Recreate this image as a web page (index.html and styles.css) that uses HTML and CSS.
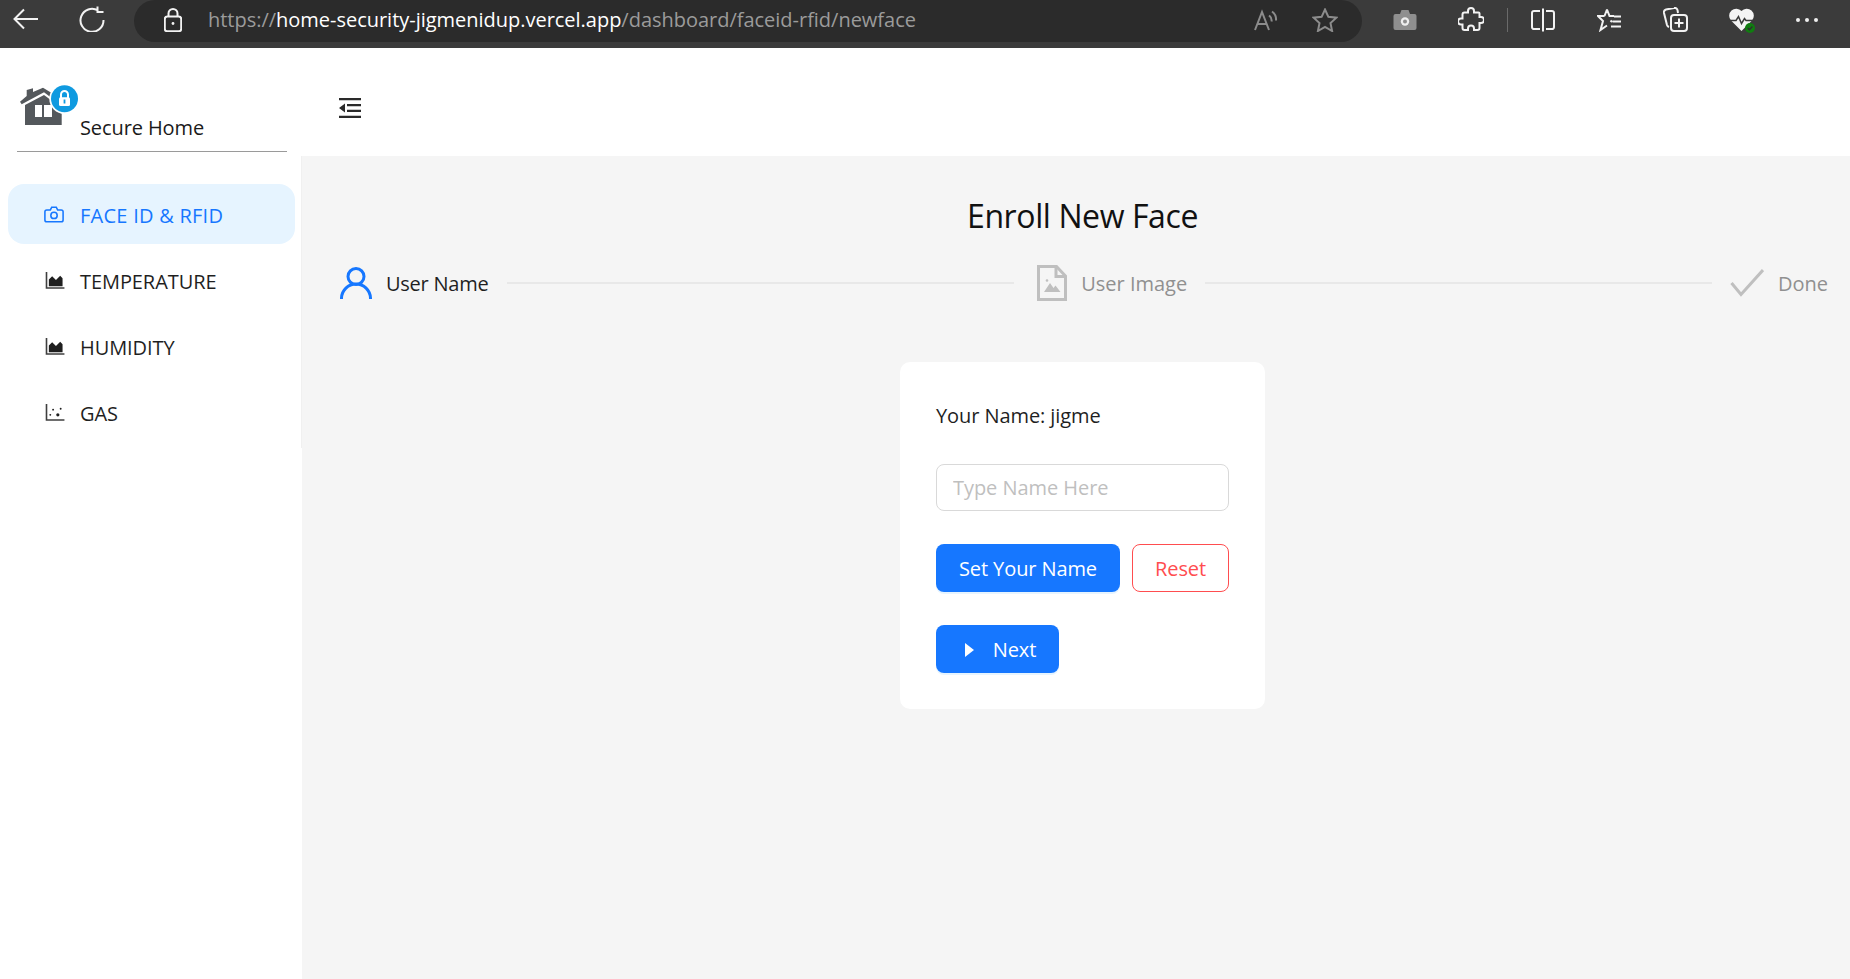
FILE: index.html
```html
<!DOCTYPE html>
<html lang="en">
<head>
<meta charset="utf-8">
<title>Secure Home</title>
<link rel="stylesheet" href="styles.css">
</head>
<body>
<header class="browser">
  <svg class="bi back" viewBox="0 0 26 22"><path d="M25 11H2M11 1.500 1.500 11l9.500 9.500"/></svg>
  <svg class="bi reload" viewBox="0 0 26 26"><path d="M19 4.500A11.500 11.500 0 1 0 24.500 14M18.500 .5v5.500H24.500"/></svg>
  <div class="urlbar">
    <svg class="bi lock" viewBox="0 0 18 24"><rect x=".8" y="8.500" width="16.400" height="14.700" rx="2.500"/><path d="M4.500 8.500V5.500a4.500 4.500 0 0 1 9 0v3"/><circle class="solid" cx="9" cy="15.500" r="1.400"/></svg>
    <div class="url"><span class="dim">https://</span><span class="host">home-security-jigmenidup.vercel.app</span><span class="dim">/dashboard/faceid-rfid/newface</span></div>
    <svg class="bi gray read" viewBox="0 0 24 22"><path d="M1 21 8 3l7 18M3.500 15h9M15 6.500a6 6 0 0 1 2.500 6M18 2.500a10 10 0 0 1 4 9"/></svg>
    <svg class="bi gray star" viewBox="0 0 26 24"><path d="m13 1.500 3.400 7.300 8 .9-5.900 5.400 1.600 7.900-7.100-4-7.100 4 1.600-7.900-5.900-5.400 8-.9z"/></svg>
  </div>
  <svg class="ti camera" viewBox="0 0 24 22"><path class="camfill" d="M2.500 5H7l1.500-4h7L17 5h4.500A2 2 0 0 1 23.500 7v12a2 2 0 0 1-2 2h-19a2 2 0 0 1-2-2V7a2 2 0 0 1 2-2z"/><circle class="camhole" cx="12" cy="12.500" r="4.200"/><circle class="camfill" cx="12" cy="12.500" r="2"/></svg>
  <svg class="bi puzzle" viewBox="0 0 26 26"><path d="M10 4a3 3 0 0 1 6 0v1.500h4.500a1 1 0 0 1 1 1V10H23a3 3 0 0 1 0 6h-1.500v5a2 2 0 0 1-2 2H16v-1.500a3 3 0 0 0-6 0V23H6.500a2 2 0 0 1-2-2v-3.500H3a3 3 0 0 1 0-6h1.500V7.500a2 2 0 0 1 2-2H10z"/></svg>
  <span class="sep"></span>
  <svg class="bi split" viewBox="0 0 24 24"><path d="M9 3H3.500A2 2 0 0 0 1 5v14a2 2 0 0 0 2.500 2H9M15 3h5.500A2 2 0 0 1 23 5v14a2 2 0 0 1-2.500 2H15M12 .5v23"/></svg>
  <svg class="bi favs" viewBox="0 0 25 24"><path d="M10 1.500 12.500 8H17M13.500 12.500 15 14M7.500 8H1l5 5-2.500 9 6.500-4.500M10 1.500 7.500 8M17 8.500h7M15.500 13.500h8.500M14 18.500h10"/></svg>
  <svg class="bi coll" viewBox="0 0 25 25"><path d="M6 20a3 3 0 0 1-2-2L1 6a3 3 0 0 1 2-3.500L11 1a3 3 0 0 1 3.500 2l.5 3"/><rect x="8" y="8" width="16" height="16" rx="3"/><path d="M16 11.500v9M11.500 16h9"/></svg>
  <svg class="ti heart" viewBox="0 0 26 26"><path class="hfill" d="M12.500 23 2 12.500A7 7 0 0 1 12.500 3 7 7 0 0 1 23 12.500z"/><path class="hline" d="M0 12.500h7l2.500-4 3 7 3-5 1.500 2h9"/><circle class="badge" cx="21" cy="20" r="5"/><path class="btick" d="m18.700 20 1.700 1.700 3-3.200"/></svg>
  <div class="dots"><i></i><i></i><i></i></div>
</header>

<div class="app">
  <aside class="sidebar">
    <div class="brand">
      <svg class="logo" viewBox="0 0 60 42">
        <path class="house" d="M0 16.700 6.700 11V5L13 3.300V7L23 2.700 35 10 33 14 24 7.300 1.700 19.300z"/>
        <path class="house" d="M5 20 24 10 41.700 23V40H5z"/>
        <rect class="win" x="15" y="20" width="7" height="12"/>
        <rect class="win" x="24" y="20" width="8" height="12"/>
        <circle class="ring" cx="44.500" cy="13.700" r="15.200"/>
        <circle class="disc" cx="44.500" cy="13.700" r="13.500"/>
        <path class="shackle" d="M41 13V9.500a3.500 3.500 0 0 1 7 0V13"/>
        <rect class="ring" x="39" y="12.300" width="11" height="8.700" rx="1.500"/>
        <rect class="disc" x="43.600" y="14.500" width="1.800" height="4"/>
      </svg>
      <span class="brand-name">Secure Home</span>
    </div>
    <nav class="menu">
      <a class="item active"><svg class="micon" viewBox="0 0 22 18"><path class="mstroke" d="M3 4h4l1.500-3h5L15 4h4a2 2 0 0 1 2 2v9a2 2 0 0 1-2 2H3a2 2 0 0 1-2-2V6a2 2 0 0 1 2-2z"/><circle class="mstroke" cx="11" cy="10" r="3.500"/></svg>FACE ID &amp; RFID</a>
      <a class="item"><svg class="micon chart" viewBox="0 0 20 18"><path class="mstroke" d="M1 0v17h19"/><path class="mfill" d="M3.500 15V8L7 4.500l4 4L15.500 4 18 6.500V15z"/></svg>TEMPERATURE</a>
      <a class="item"><svg class="micon chart" viewBox="0 0 20 18"><path class="mstroke" d="M1 0v17h19"/><path class="mfill" d="M3.500 15V8L7 4.500l4 4L15.500 4 18 6.500V15z"/></svg>HUMIDITY</a>
      <a class="item"><svg class="micon chart" viewBox="0 0 20 18"><path class="mstroke" d="M1 0v17h19"/><circle class="mfill" cx="5" cy="11.500" r="1"/><circle class="mfill" cx="8" cy="6" r="1"/><circle class="mfill" cx="13" cy="11.500" r="1.700"/><circle class="mfill" cx="16" cy="5" r="1"/></svg>GAS</a>
    </nav>
  </aside>

  <div class="content">
    <div class="topbar">
      <svg class="collapse" viewBox="0 0 22 20"><path d="M0 0h22v2.200H0zM0 17.800h22V20H0zM8 6h14v2.200H8zM8 11.800h14V14H8zM0 10l6-4.500v9z"/></svg>
    </div>
    <main class="main">
      <h1 class="title">Enroll New Face</h1>
      <ol class="steps">
        <li class="step current">
          <svg class="sicon user" viewBox="0 0 32 32"><circle cx="16" cy="9.500" r="8"/><path d="M1.500 32v-1A14.500 14.500 0 0 1 16 17a14.500 14.500 0 0 1 14.500 14v1"/></svg>
          <span>User Name</span>
        </li>
        <li class="rule first"></li>
        <li class="step">
          <svg class="sicon file" viewBox="0 0 30 36"><path class="fstroke" d="M1.500 1.500h18l9 9.500v23.500h-27z"/><path class="fstroke" d="M19 2v9.500h9"/><path class="ffill" d="m7 27 6-9 3.500 5 2-2.500 5 6.500z"/><circle class="ffill" cx="10" cy="15.500" r="1.300"/></svg>
          <span>User Image</span>
        </li>
        <li class="rule"></li>
        <li class="step">
          <svg class="sicon check" viewBox="0 0 34 28"><path d="M1.500 14 11 25.500 33 1"/></svg>
          <span>Done</span>
        </li>
      </ol>
      <section class="card">
        <p class="your-name">Your Name: jigme</p>
        <input class="name-input" type="text" placeholder="Type Name Here">
        <div class="actions">
          <button class="btn primary set" type="button">Set Your Name</button>
          <button class="btn danger" type="button">Reset</button>
        </div>
        <button class="btn primary next" type="button"><svg class="play" viewBox="0 0 9 14"><path d="M0 0l9 7-9 7z"/></svg>Next</button>
      </section>
    </main>
  </div>
</div>
</body>
</html>
```

FILE: styles.css
```css
* { box-sizing: border-box; }
html, body { margin: 0; height: 100%; overflow: hidden; }
body { font-family: "Open Sans", "Noto Sans", sans-serif; color: #1f1f1f; background: #fff; width: 1850px; height: 979px; display: flex; flex-direction: column; }

.browser { height: 48px; flex: none; background: #3b3b3b; display: flex; align-items: flex-start; position: relative; }
.bi { fill: none; stroke: #f2f2f2; stroke-width: 2; flex: none; display: block; }
.bi .solid { fill: #f2f2f2; stroke: none; }
.bi.gray { stroke: #8c8c8c; }
.ti { flex: none; display: block; }
.back { width: 26px; height: 22px; margin: 8px 0 0 13px; }
.reload { width: 26px; height: 26px; margin: 6px 0 0 40px; }
.urlbar { width: 1228px; height: 42px; margin-left: 29px; background: #2b2b2b; border-radius: 21px; display: flex; align-items: center; flex: none; }
.lock { width: 18px; height: 24px; margin-left: 30px; margin-top: -2px; }
.url { margin-left: 26px; width: 1046px; font-size: 20px; letter-spacing: -.02px; white-space: nowrap; flex: none; margin-top: -3px; }
.dim { color: #9b9b9b; }
.host { color: #fff; }
.read { width: 24px; height: 22px; margin-left: 0; margin-top: -2px; }
.star { width: 26px; height: 24px; margin-left: 34px; margin-top: -2px; }
.camera { width: 24px; height: 22px; margin: 9px 0 0 31px; }
.camfill { fill: #8f8f8f; }
.camhole { fill: #eee; }
.puzzle { width: 26px; height: 26px; margin: 7px 0 0 41px; }
.sep { width: 1px; height: 24px; background: #6a6a6a; margin: 8px 0 0 23px; flex: none; }
.split { width: 24px; height: 24px; margin: 8px 0 0 23px; }
.favs { width: 25px; height: 24px; margin: 8px 0 0 42px; }
.coll { width: 25px; height: 25px; margin: 7px 0 0 41px; }
.heart { width: 26px; height: 26px; margin: 8px 0 0 41px; }
.hfill { fill: #f4f4f4; }
.hline { fill: none; stroke: #3b3b3b; stroke-width: 1.500; }
.badge { fill: #107c10; }
.btick { fill: none; stroke: #2d2d2d; stroke-width: 1.300; }
.dots { display: flex; gap: 5px; margin: 18px 0 0 41px; }
.dots i { width: 4px; height: 4px; border-radius: 50%; background: #eee; display: block; }

.app { flex: 1; display: flex; min-height: 0; }
.sidebar { width: 302px; flex: none; background: #fff; }
.brand { height: 104px; margin: 0 15px 0 17px; border-bottom: 1px solid #9a9a9a; position: relative; padding: 67px 0 0 63px; width: 270px; }
.logo { width: 60px; height: 42px; position: absolute; left: 3px; top: 37px; }
.house { fill: #54585c; }
.win { fill: #fff; }
.ring { fill: #fff; }
.disc { fill: #0f9ae0; }
.shackle { fill: none; stroke: #fff; stroke-width: 2; }
.brand-name { font-size: 20px; line-height: 26px; letter-spacing: -.1px; color: #1a1a1a; display: block; white-space: nowrap; }
.menu { margin: 4px 0 0 8px; padding: 28px 6px 6px 0; border-right: 1px solid #f0f0f0; display: flex; flex-direction: column; gap: 6px; }
.item { height: 60px; border-radius: 16px; display: flex; align-items: center; padding: 2px 0 0 36px; font-size: 20px; letter-spacing: -.08px; color: #1f1f1f; white-space: nowrap; }
.item.active { background: #e6f4ff; color: #1677ff; letter-spacing: .25px; }
.micon { width: 20px; height: 17px; margin: -2px 16px 0 0; flex: none; }
.micon.chart { margin-left: 1px; margin-right: 15px; }
.mstroke { fill: none; stroke: #3f3f3f; stroke-width: 1.700; }
.mfill { fill: #1f1f1f; }
.active .mstroke { stroke: #1677ff; }

.content { flex: 1; min-width: 0; display: flex; flex-direction: column; }
.topbar { height: 108px; flex: none; background: #fff; display: flex; align-items: center; padding: 12px 0 0 37px; }
.collapse { width: 22px; height: 20px; fill: #2a2a2a; }
.main { flex: 1; background: #f5f5f5; padding: 0 0 0 13px; display: flex; flex-direction: column; align-items: center; }
.title { margin: 38px 0 0; font-size: 32px; line-height: 44px; font-weight: 400; letter-spacing: -.4px; color: #111; }
.steps { list-style: none; margin: 22px 0 0; padding: 0 22px 0 25px; width: 100%; display: flex; align-items: center; height: 46px; }
.step { display: flex; align-items: center; gap: 14px; font-size: 20px; color: #909090; white-space: nowrap; flex: none; }
.step.current { color: #1f1f1f; letter-spacing: -.25px; }
.rule { flex: 1; height: 2px; background: #e8e8e8; margin: 0 18px; }
.rule.first { margin: 0 23px 0 19px; }
.sicon { display: block; flex: none; }
.user { width: 32px; height: 32px; fill: none; stroke: #1677ff; stroke-width: 3; }
.file { width: 30px; height: 36px; }
.fstroke { fill: none; stroke: #bfbfbf; stroke-width: 3; }
.ffill { fill: #bfbfbf; }
.check { width: 34px; height: 28px; fill: none; stroke: #bfbfbf; stroke-width: 3; }
.card { width: 365px; height: 347px; margin-top: 56px; background: #fff; border-radius: 10px; padding: 36px; display: flex; flex-direction: column; align-items: flex-start; }
.your-name { margin: 0; font-size: 20px; line-height: 36px; letter-spacing: -.08px; color: #1f1f1f; white-space: nowrap; }
.name-input { width: 293px; height: 47px; margin-top: 30px; border: 1px solid #d9d9d9; border-radius: 8px; padding: 0 16px 0 16px; font: inherit; font-size: 20px; letter-spacing: -.05px; outline: none; color: #1f1f1f; }
.name-input::placeholder { color: #bfbfbf; opacity: 1; }
.actions { display: flex; gap: 12px; margin-top: 33px; }
.btn { height: 48px; border-radius: 8px; font: inherit; font-size: 20px; letter-spacing: -.1px; cursor: pointer; display: flex; align-items: center; justify-content: center; padding: 1px 0 0; white-space: nowrap; }
.primary { background: #1677ff; color: #fff; border: none; box-shadow: 0 2px 0 rgba(5,145,255,.1); }
.danger { width: 97px; background: #fff; border: 1px solid #ff4d4f; color: #ff4d4f; }
.set { width: 184px; }
.next { width: 123px; margin-top: 33px; gap: 19px; padding-left: 6px; }
.play { width: 9px; height: 14px; fill: #fff; }
```
